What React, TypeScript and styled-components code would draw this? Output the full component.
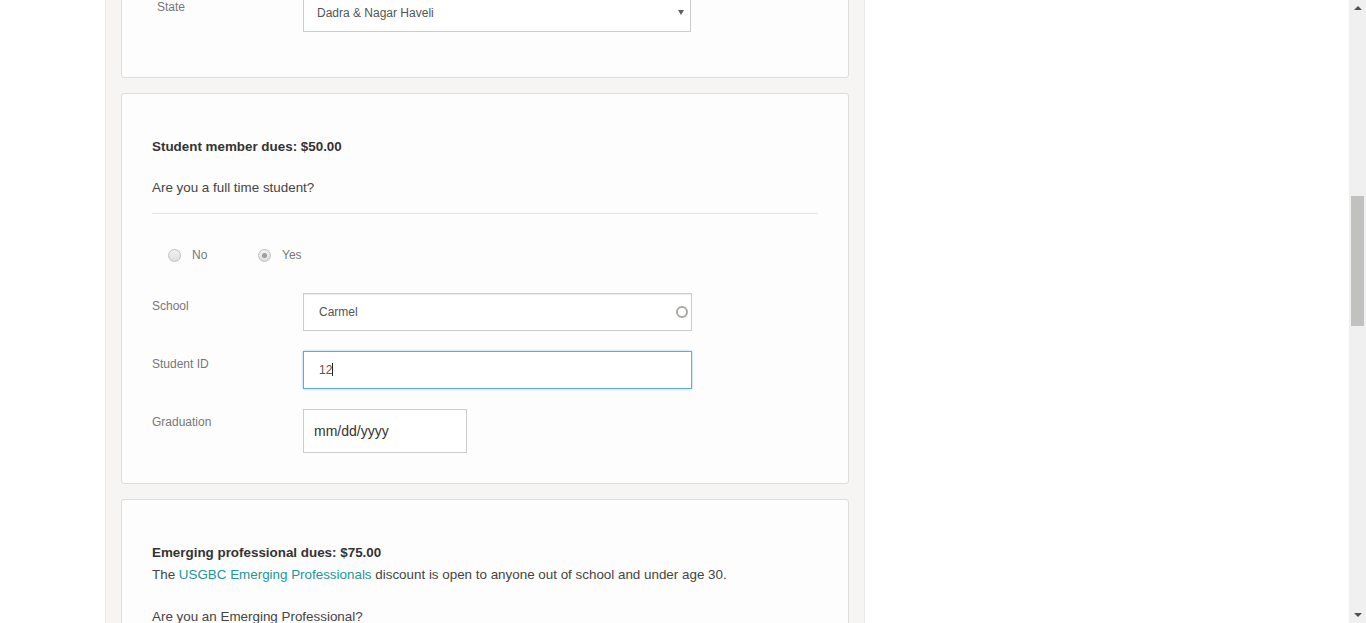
import React, { useLayoutEffect, useRef, useState } from "react";
import styled, { createGlobalStyle } from "styled-components";

const GlobalStyle = createGlobalStyle`
  html, body { margin: 0; padding: 0; height: 100%; overflow: hidden; background: #fff; }
  body { font-family: "Liberation Sans", Arial, sans-serif; color: #333; }
  *, *::before, *::after { box-sizing: border-box; }
`;

const Shell = styled.div`
  display: flex;
  height: 100vh;
`;

const Scroller = styled.div`
  flex: 1;
  min-width: 0;
  overflow-y: scroll;
  overflow-x: hidden;
  background: #fff;
  scrollbar-width: none;
  &::-webkit-scrollbar { display: none; }
`;

const ScrollBar = styled.div`
  flex: none;
  width: 17px;
  background: #f0f0f0;
  display: flex;
  flex-direction: column;
`;

const ScrollButton = styled.button<{ $dir: "up" | "down" }>`
  flex: none;
  height: 17px;
  width: 17px;
  border: 0;
  padding: 0;
  background: #f0f0f0;
  display: flex;
  align-items: center;
  justify-content: center;
  &::before {
    content: "";
    width: 0;
    height: 0;
    border-left: 4px solid transparent;
    border-right: 4px solid transparent;
    ${(p) =>
      p.$dir === "up"
        ? "border-bottom: 4px solid #505050; margin-top: -1px;"
        : "border-top: 4px solid #505050; margin-top: 1px;"}
  }
`;

const Track = styled.div`
  flex: 1;
  display: flex;
  flex-direction: column;
  padding: 0 2px;
`;

const Thumb = styled.div`
  flex: none;
  background: #c1c1c0;
`;

const Page = styled.div`
  display: flex;
  padding-left: 105px;
  min-height: 2823px;
`;

const Column = styled.main`
  width: 760px;
  background: #f6f5f3;
  border-left: 1px solid #ebe9e6;
  border-right: 1px solid #ebe9e6;
  padding: 15px 15px 40px;
  display: flex;
  flex-direction: column;
  gap: 15px;
`;

const PageHeader = styled.header`
  padding: 48px 30px;
`;

const PageTitle = styled.h1`
  margin: 0;
  font-size: 26px;
  line-height: 32px;
  font-weight: normal;
  color: #333;
`;

const Lead = styled.p`
  margin: 8px 0 0;
  font-size: 13.4px;
  line-height: 22px;
  color: #555;
`;

const Card = styled.section<{ $padBottom?: number }>`
  background: #fdfdfd;
  border: 1px solid #dfddd9;
  border-radius: 3px;
  padding: 42px 30px ${(p) => p.$padBottom ?? 30}px;
  display: flex;
  flex-direction: column;
`;

const Dues = styled.p`
  margin: 0;
  font-size: 13.4px;
  line-height: 22px;
  font-weight: bold;
  color: #333;
`;

const Desc = styled.p`
  margin: 0;
  font-size: 13.4px;
  line-height: 22px;
  color: #444;
`;

const Question = styled.p<{ $gap?: number }>`
  margin: ${(p) => p.$gap ?? 19}px 0 0;
  font-size: 13.4px;
  line-height: 22px;
  color: #444;
`;

const Link = styled.a`
  color: #22979a;
  text-decoration: none;
`;

const Divider = styled.hr`
  border: 0;
  border-top: 1px solid #e6e5e2;
  margin: 14px 0 0;
  height: 0;
`;

const RadioGroup = styled.div`
  display: flex;
  align-items: center;
  height: 22px;
  margin: 30px 0 0;
  padding-left: 16px;
`;

const RadioItem = styled.label`
  width: 90px;
  display: flex;
  align-items: center;
  gap: 11px;
  font-size: 12px;
  color: #777;
  cursor: pointer;
`;

const RadioDot = styled.span<{ $checked?: boolean }>`
  width: 13px;
  height: 13px;
  border-radius: 50%;
  border: 1px solid #bfbebc;
  background: linear-gradient(#f2f2f2, #dedede);
  display: inline-flex;
  align-items: center;
  justify-content: center;
  &::after {
    content: "";
    display: ${(p) => (p.$checked ? "block" : "none")};
    width: 5px;
    height: 5px;
    border-radius: 50%;
    background: #9f9f9f;
  }
`;

const FormRow = styled.div<{ $gap?: number }>`
  display: grid;
  grid-template-columns: 151px auto;
  align-items: start;
  margin-top: ${(p) => p.$gap ?? 20}px;
`;

const Label = styled.label<{ $indent?: number }>`
  font-size: 12px;
  line-height: 18px;
  padding-top: 4px;
  padding-left: ${(p) => p.$indent ?? 0}px;
  color: #777;
`;

const FieldWrap = styled.div<{ $width?: number }>`
  position: relative;
  width: ${(p) => p.$width ?? 389}px;
`;

const TextInput = styled.input<{ $focused?: boolean }>`
  display: block;
  width: 100%;
  height: 38px;
  padding: 0 15px;
  font-family: inherit;
  font-size: 12px;
  color: #555;
  background: #fff;
  border: 1px solid ${(p) => (p.$focused ? "#5eaaea" : "#ccc")};
  border-radius: 0;
  box-shadow: ${(p) =>
    p.$focused
      ? "0 0 2px rgba(94, 170, 234, 0.7)"
      : "inset 0 1px 1px rgba(0, 0, 0, 0.08)"};
  outline: none;
`;

const DateInput = styled.input`
  display: block;
  width: 164px;
  height: 44px;
  padding: 0 10px;
  font-family: inherit;
  font-size: 14px;
  color: #333;
  background: #fff;
  border: 1px solid #ccc;
  border-radius: 0;
  outline: none;
  &::placeholder { color: #333; opacity: 1; }
`;

const Select = styled.select`
  display: block;
  width: 100%;
  height: 38px;
  padding: 0 24px 0 13px;
  font-family: inherit;
  font-size: 12px;
  color: #555;
  background: #fff;
  border: 1px solid #ccc;
  border-radius: 0;
  appearance: none;
  outline: none;
`;

const SelectArrow = styled.span`
  position: absolute;
  right: 7px;
  top: 16px;
  width: 0;
  height: 0;
  border-left: 3px solid transparent;
  border-right: 3px solid transparent;
  border-top: 5px solid #5f5f5f;
  pointer-events: none;
`;

const Spinner = styled.span`
  position: absolute;
  right: 4px;
  top: 13px;
  width: 12px;
  height: 12px;
  border-radius: 50%;
  border: 2px solid #aaa8a4;
  pointer-events: none;
`;

const Caret = styled.span`
  position: absolute;
  left: 29px;
  top: 12px;
  width: 1px;
  height: 13px;
  background: #222;
  pointer-events: none;
`;

const SectionTitle = styled.h2`
  margin: 0;
  font-size: 13.4px;
  line-height: 22px;
  font-weight: bold;
  color: #333;
`;

const contactFields = [
  "First name",
  "Last name",
  "Email",
  "Phone",
  "Company",
  "Job title",
  "Address line 1",
  "Address line 2",
  "City",
  "Country",
];

const states = [
  "Andaman & Nicobar Islands",
  "Andhra Pradesh",
  "Chandigarh",
  "Dadra & Nagar Haveli",
  "Daman & Diu",
  "Delhi",
  "Goa",
  "Gujarat",
  "Karnataka",
  "Maharashtra",
];

type ThumbGeom = { top: number; height: number };

export default function App() {
  const scrollerRef = useRef<HTMLDivElement>(null);
  const anchorRef = useRef<HTMLDivElement>(null);
  const trackRef = useRef<HTMLDivElement>(null);
  const [thumb, setThumb] = useState<ThumbGeom>({ top: 0, height: 40 });

  const measure = () => {
    const s = scrollerRef.current;
    const t = trackRef.current;
    if (!s || !t) return;
    const trackH = t.clientHeight;
    const height = Math.max(20, Math.round((trackH * s.clientHeight) / s.scrollHeight));
    const max = s.scrollHeight - s.clientHeight;
    const top = max > 0 ? Math.round((s.scrollTop / max) * (trackH - height)) : 0;
    setThumb({ top, height });
  };

  useLayoutEffect(() => {
    const s = scrollerRef.current;
    const a = anchorRef.current;
    if (!s || !a) return;
    const offset =
      a.getBoundingClientRect().top - s.getBoundingClientRect().top + s.scrollTop;
    s.scrollTop = offset + 6;
    measure();
  }, []);

  return (
    <>
      <GlobalStyle />
      <Shell>
        <Scroller ref={scrollerRef} onScroll={measure}>
          <Page>
            <Column>
              <PageHeader>
                <PageTitle>Membership application</PageTitle>
                <Lead>Tell us about yourself to choose the right membership level.</Lead>
              </PageHeader>

              <Card $padBottom={45}>
                <SectionTitle>Contact information</SectionTitle>
                {contactFields.map((f) => (
                  <FormRow key={f}>
                    <Label $indent={5}>{f}</Label>
                    <FieldWrap>
                      <TextInput defaultValue="" />
                    </FieldWrap>
                  </FormRow>
                ))}
                <FormRow ref={anchorRef}>
                  <Label $indent={5}>State</Label>
                  <FieldWrap $width={388}>
                    <Select defaultValue="Dadra & Nagar Haveli">
                      {states.map((s) => (
                        <option key={s} value={s}>
                          {s}
                        </option>
                      ))}
                    </Select>
                    <SelectArrow />
                  </FieldWrap>
                </FormRow>
              </Card>

              <Card>
                <Dues>Student member dues: $50.00</Dues>
                <Question>Are you a full time student?</Question>
                <Divider />
                <RadioGroup role="radiogroup">
                  <RadioItem>
                    <RadioDot role="radio" aria-checked="false" />
                    No
                  </RadioItem>
                  <RadioItem>
                    <RadioDot role="radio" aria-checked="true" $checked />
                    Yes
                  </RadioItem>
                </RadioGroup>
                <FormRow $gap={27}>
                  <Label>School</Label>
                  <FieldWrap>
                    <TextInput defaultValue="Carmel" />
                    <Spinner />
                  </FieldWrap>
                </FormRow>
                <FormRow>
                  <Label>Student ID</Label>
                  <FieldWrap>
                    <TextInput defaultValue="12" $focused />
                    <Caret />
                  </FieldWrap>
                </FormRow>
                <FormRow>
                  <Label>Graduation</Label>
                  <FieldWrap $width={164}>
                    <DateInput type="text" placeholder="mm/dd/yyyy" />
                  </FieldWrap>
                </FormRow>
              </Card>

              <Card>
                <Dues>Emerging professional dues: $75.00</Dues>
                <Desc>
                  The <Link href="#">USGBC Emerging Professionals</Link> discount is open to
                  anyone out of school and under age 30.
                </Desc>
                <Question $gap={20}>Are you an Emerging Professional?</Question>
                <Divider />
                <RadioGroup role="radiogroup">
                  <RadioItem>
                    <RadioDot role="radio" aria-checked="true" $checked />
                    No
                  </RadioItem>
                  <RadioItem>
                    <RadioDot role="radio" aria-checked="false" />
                    Yes
                  </RadioItem>
                </RadioGroup>
              </Card>
            </Column>
          </Page>
        </Scroller>
        <ScrollBar aria-hidden="true">
          <ScrollButton $dir="up" tabIndex={-1} />
          <Track ref={trackRef}>
            <Thumb style={{ marginTop: thumb.top, height: thumb.height }} />
          </Track>
          <ScrollButton $dir="down" tabIndex={-1} />
        </ScrollBar>
      </Shell>
    </>
  );
}
